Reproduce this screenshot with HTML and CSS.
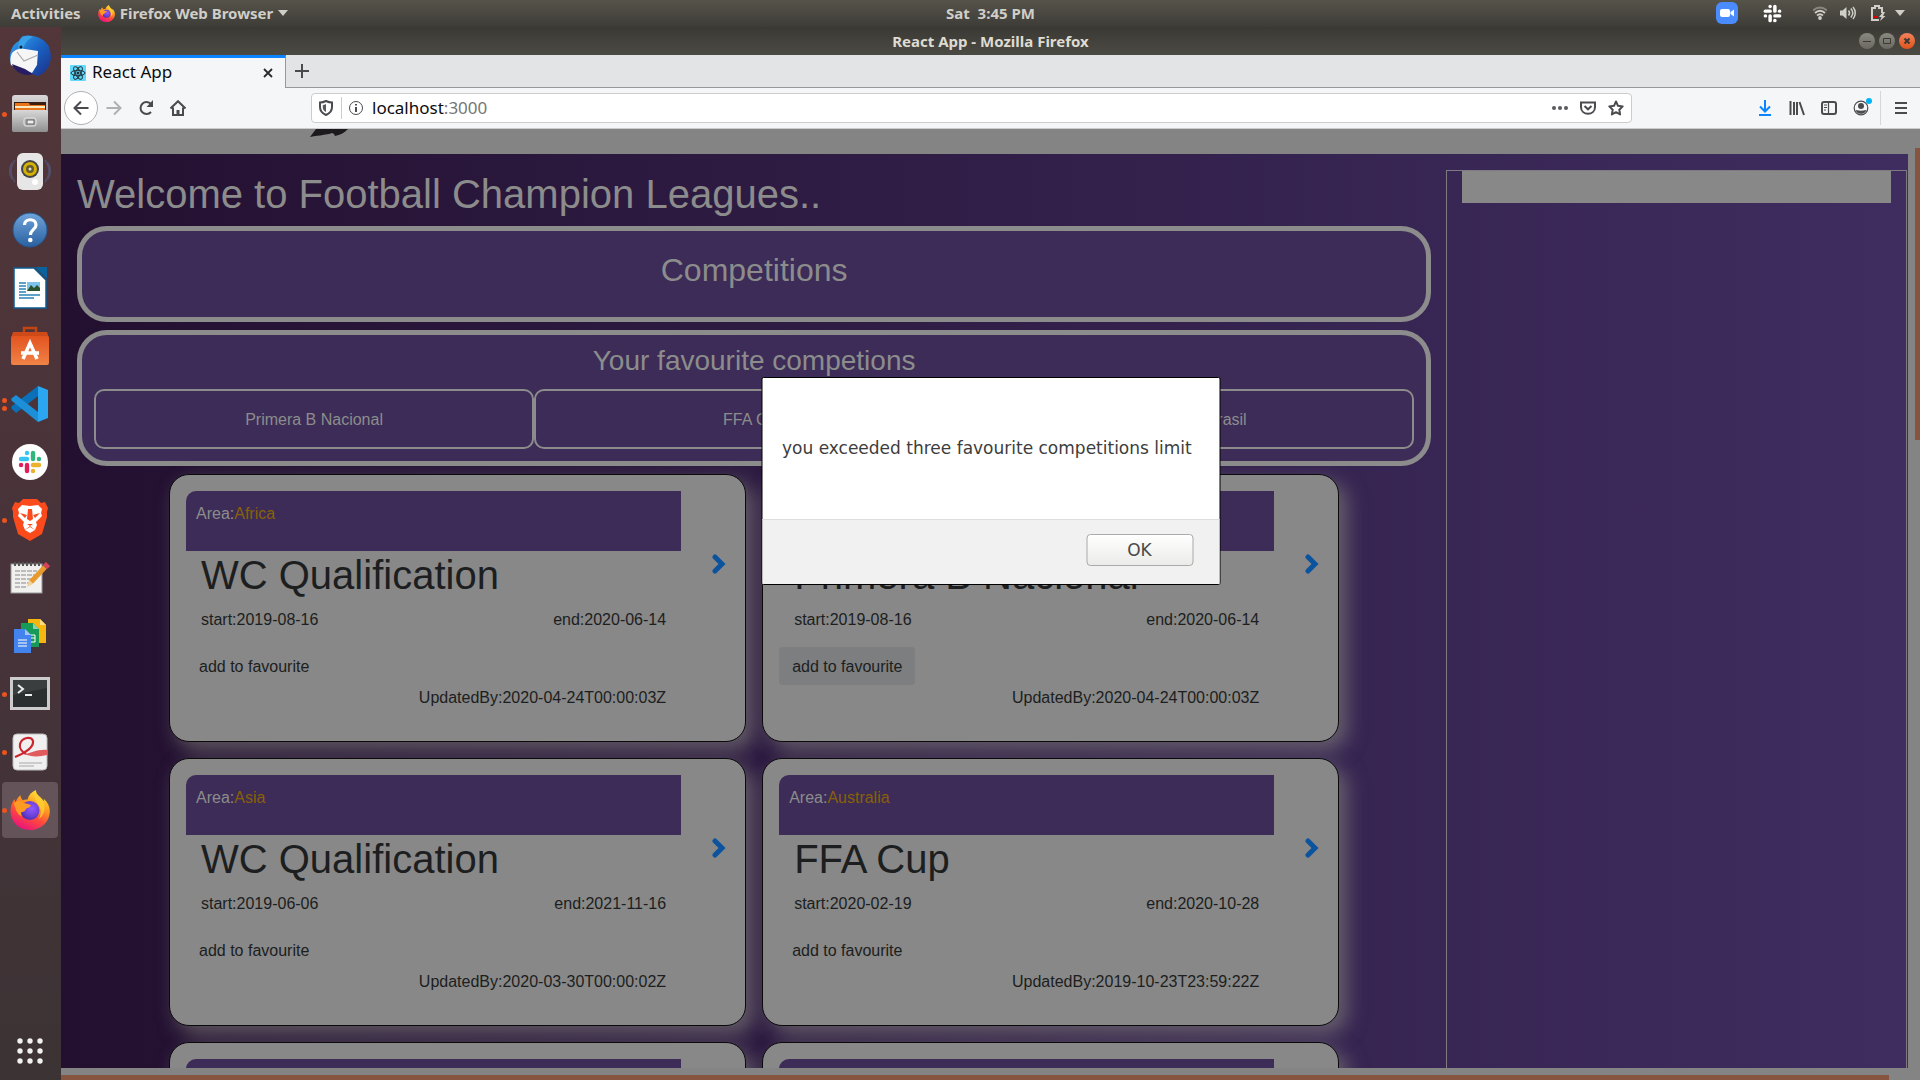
FILE: index.html
```html
<!DOCTYPE html>
<html lang="en">
<head>
<meta charset="utf-8">
<title>React App</title>
<link rel="stylesheet" href="styles.css">
</head>
<body>
<svg width="0" height="0" class="defs" aria-hidden="true">
  <defs>
    <linearGradient id="ffBody" x1="0.8" y1="0" x2="0.3" y2="1"><stop offset="0" stop-color="#fff044"/><stop offset=".35" stop-color="#ffa01e"/><stop offset=".65" stop-color="#ff4a3c"/><stop offset="1" stop-color="#e8117f"/></linearGradient>
    <radialGradient id="ffCore" cx=".6" cy=".4" r=".7"><stop offset="0" stop-color="#9059ff"/><stop offset=".6" stop-color="#6a3fd6"/><stop offset="1" stop-color="#3b2a9c"/></radialGradient>
    <linearGradient id="metal" x1="0" y1="0" x2="0" y2="1"><stop offset="0" stop-color="#d8d8d8"/><stop offset="1" stop-color="#8f8f8f"/></linearGradient>
    <linearGradient id="blueBall" x1="0" y1="0" x2="0" y2="1"><stop offset="0" stop-color="#6fa4dc"/><stop offset="1" stop-color="#2a609f"/></linearGradient>
    <linearGradient id="bird" x1="0" y1="0" x2="1" y2="1"><stop offset="0" stop-color="#35a8f0"/><stop offset=".5" stop-color="#1a62c4"/><stop offset="1" stop-color="#1c2f86"/></linearGradient>
    <linearGradient id="bag" x1="0" y1="0" x2="0" y2="1"><stop offset="0" stop-color="#e3541f"/><stop offset="1" stop-color="#f08348"/></linearGradient>
    <symbol id="firefox" viewBox="0 0 40 40">
      <path fill="url(#ffBody)" d="M20 40C8 40 .5 31 .5 21c0-5 1.800-9 4-12 .2 1.500.6 2.500 1.200 3.200C6.500 9.500 8 7 10.500 5.200c0 2 .9 3.800 2.500 5 1.500-.5 3-.7 4.500-.5C18.500 5 21.500 2 26 0c-.3 3.500 2 5.500 5 8 1 .9 2 2 2.800 3.300.2-1 .2-1.800 0-2.600C38 12.500 39.800 17 39.800 21 39.800 32 31 40 20 40z"/>
      <circle cx="20" cy="20.500" r="9.500" fill="url(#ffCore)"/>
      <path fill="#ff9a22" d="M4 13c4-3 8-3 10 0 2 .5 6 1 7 2.500-.5 1.500-3 2.500-5 3.200 0 2-2 3-4.500 3.300-.8 1.500-.3 3 .5 4.500C8 25 5 20 4 13z"/>
      <path fill="#ffcf33" d="M26 1c0 4 6 6 8 12 2 7-1 13-5 16 3-6 2-11-1-15-3-4-5-8-2-13z" opacity=".8"/>
    </symbol>
    <symbol id="slackmark" viewBox="0 0 24 24">
      <g fill="none" stroke-width="4.400" stroke-linecap="round">
        <path class="s-b" d="M3 9h6"/><path class="s-b" d="M9 3v.1"/>
        <path class="s-g" d="M15 3v6"/><path class="s-g" d="M21 9h-.1"/>
        <path class="s-y" d="M21 15h-6"/><path class="s-y" d="M15 21v-.1"/>
        <path class="s-r" d="M9 21v-6"/><path class="s-r" d="M3 15h.1"/>
      </g>
    </symbol>
    <symbol id="chevron" viewBox="0 0 14 20"><path d="M3 3l7 7-7 7" fill="none" stroke="#0c539e" stroke-width="5" stroke-linecap="round" stroke-linejoin="miter"/></symbol>
  </defs>
</svg>

<header class="topbar">
  <div class="topbar-left">
    <button class="sys-btn" type="button">Activities</button>
    <button class="sys-btn app-menu" type="button">
      <svg width="17" height="17"><use href="#firefox"/></svg>
      Firefox Web Browser
      <svg width="10" height="6" viewBox="0 0 10 6"><path d="M0 0h10L5 6z" fill="#d0cec8"/></svg>
    </button>
  </div>
  <time class="clock">Sat&nbsp; 3:45 PM</time>
  <div class="indicators">
    <svg class="ind-zoom" width="22" height="22" viewBox="0 0 22 22"><rect width="22" height="22" rx="6" fill="#4a8cff"/><rect x="4" y="7" width="10" height="8" rx="2" fill="#fff"/><path d="M14.500 10L18 7.500v7L14.500 12z" fill="#fff"/></svg>
    <svg class="ind-slack" width="19" height="19"><use href="#slackmark"/></svg>
    <svg class="ind-wifi" width="14" height="14" viewBox="0 0 14 14" fill="none" stroke="#d0cec8" stroke-width="1.800"><path d="M0 4.500c4-4 10-4 14 0" opacity=".45"/><path d="M2 7c3-3 7-3 10 0M4 9.500c2-1.700 4-1.700 6 0"/><circle cx="7" cy="12" r="1" fill="#d0cec8"/></svg>
    <svg class="ind-vol" width="16" height="14" viewBox="0 0 16 14" fill="none" stroke="#d0cec8" stroke-width="1.500"><path d="M0 4.500h2.500L6.500 1v12L2.500 9.500H0z" fill="#d0cec8" stroke="none"/><path d="M8.500 4.500c1.300 1.500 1.300 3.500 0 5M10.800 2.500c2.400 2.700 2.400 6.300 0 9M13 1c3 3.500 3 8.500 0 12"/></svg>
    <svg class="ind-bat" width="15" height="16" viewBox="0 0 15 16"><path d="M8 15H1V3h3V1h4v2h3v5" fill="none" stroke="#d0cec8" stroke-width="2"/><path d="M3 11h4v2H3z" fill="#d00"/><path d="M12 7l-4 5h2.500L9 16l5.500-5H12l2-4z" fill="#d0cec8"/></svg>
    <svg width="10" height="6" viewBox="0 0 10 6"><path d="M0 0h10L5 6z" fill="#d0cec8"/></svg>
  </div>
</header>

<div class="workspace">
  <nav class="dock" aria-label="Dock">
    <button class="dock-item" type="button" aria-label="Thunderbird">
      <svg width="42" height="42" viewBox="0 0 42 42"><path fill="url(#bird)" d="M14 1c10-2 20 2 25 9 4 8 4 17-1 24-3 4-6 6-9 7l-12-4L2 30C-1 20 2 10 10 6c1-2 2-4 4-5z"/><path fill="#3aa0e8" d="M12 4c3-4 8-4 12-2-5 2-8 6-10 12l-5 2c0-5 0-9 3-12z"/><path fill="#f6f6f6" d="M3 18c3-4 8-5 13-4l13 2-1 14-5 8-9-3-12-5c-1-4-1-8 1-12z"/><path d="M8 17l7 9 14-6" fill="none" stroke="#aaa" stroke-width="1.200"/><path fill="#281d63" d="M3 29l13 5 8 5C14 42 6 37 3 29z"/><circle cx="12" cy="12" r="1.500" fill="#123"/></svg>
    </button>
    <button class="dock-item" type="button" aria-label="Files"><i class="dot"></i>
      <svg width="38" height="40" viewBox="0 0 38 40"><rect x="1" y="1" width="36" height="37" rx="3" fill="url(#metal)"/><rect x="3" y="8" width="32" height="10" fill="#3c1e10"/><path fill="#e8751a" d="M4 9h14l1 2h15v6H4z"/><path fill="#fbe9c0" d="M4 12h30v2H4z"/><rect x="1" y="16" width="36" height="22" rx="2" fill="url(#metal)"/><rect x="13" y="24" width="12" height="8" rx="2" fill="#aaa" stroke="#e8e8e8"/><rect x="16" y="26" width="7" height="4" fill="#eee" stroke="#666"/></svg>
    </button>
    <button class="dock-item" type="button" aria-label="Rhythmbox">
      <svg width="42" height="40" viewBox="0 0 42 40"><g fill="none" stroke="#56587c" stroke-width="1.500" opacity=".7"><path d="M6 8c-5 7-5 15 0 22M3 11c-3 5-3 11 0 16M36 8c5 7 5 15 0 22M39 11c3 5 3 11 0 16"/></g><rect x="8" y="1" width="26" height="37" rx="6" fill="#e6e6e6"/><circle cx="21" cy="17" r="9" fill="#444"/><circle cx="21" cy="17" r="7" fill="#d4b106"/><circle cx="21" cy="17" r="4" fill="#665c2a"/><circle cx="21" cy="17" r="1.500" fill="#ddd"/><circle cx="26" cy="30" r="3" fill="#fff"/></svg>
    </button>
    <button class="dock-item" type="button" aria-label="Help">
      <svg width="36" height="36" viewBox="0 0 36 36"><circle cx="18" cy="18" r="17" fill="url(#blueBall)" stroke="#24578f"/><path d="M12.500 13c0-7 11.500-7 11.500 0 0 4.500-5.500 4.500-5.500 10" fill="none" stroke="#fff" stroke-width="3.200"/><circle cx="18.300" cy="28" r="2.300" fill="#fff"/></svg>
    </button>
    <button class="dock-item" type="button" aria-label="LibreOffice Writer">
      <svg width="34" height="42" viewBox="0 0 34 42"><path fill="#fff" stroke="#0d5d94" stroke-width="1.500" d="M1 1h20l12 12v28H1z"/><path fill="#0b639e" d="M22 0h12v12z"/><path stroke="#2b83b8" stroke-width="1.500" d="M6 16h7M6 19h7M6 22h7M6 25h7M6 28h21M6 31h15"/><rect x="14" y="15" width="13" height="9" fill="#7cc4ec"/><path fill="#2b542c" d="M14 24l4-6 3 3 3-3 3 3v3z"/></svg>
    </button>
    <button class="dock-item" type="button" aria-label="Ubuntu Software">
      <svg width="38" height="40" viewBox="0 0 38 40"><path d="M13 9V2h12v7" fill="none" stroke="#c24413" stroke-width="2.500"/><path fill="#cf4a18" d="M2 6h34l2 6H0z"/><rect y="10" width="38" height="29" rx="2" fill="url(#bag)"/><path d="M12 33l7-16 7 16M10 27h18" fill="none" stroke="#fff" stroke-width="3.500"/></svg>
    </button>
    <button class="dock-item" type="button" aria-label="Visual Studio Code"><i class="dot"></i><i class="dot"></i>
      <svg width="38" height="38" viewBox="0 0 38 38"><path fill="#0a70b8" d="M27 1v10L5 28l-4-4c-1-1-1-2 0-3z"/><path fill="#1c8fd8" d="M27 37V27L5 10l-4 3c-1 1-1 2 0 3z"/><path fill="#2aa7f0" d="M27 1l10 4v28l-10 4z"/></svg>
    </button>
    <button class="dock-item" type="button" aria-label="Slack">
      <svg width="36" height="36" viewBox="0 0 36 36"><circle cx="18" cy="18" r="18" fill="#fff"/><use href="#slackmark" x="6" y="6" width="24" height="24"/></svg>
    </button>
    <button class="dock-item" type="button" aria-label="Brave"><i class="dot"></i>
      <svg width="36" height="42" viewBox="0 0 36 42"><path fill="#fb4a1b" d="M11 0h14l4 4 4-1 3 6-1 4 0 5-5 17-12 7-12-7L1 18l0-5-1-4 3-6 4 1z"/><path fill="#fff" d="M10 6l8 1 8-1 4 4-1 4 1 3-6 6 1 3-2 5-5-4-5 4-2-5 1-3-6-6 1-3-1-4z"/><path fill="#fb4a1b" d="M8 14l7 2-2 3zM28 14l-7 2 2 3zM16 10h4l1 10-3 2-3-2zM15 25h6l-3 2z"/><path fill="#fff" d="M18 28l5 3-5 3-5-3z"/></svg>
    </button>
    <button class="dock-item" type="button" aria-label="Text Editor">
      <svg width="40" height="34" viewBox="0 0 40 34"><rect x="1" y="3" width="31" height="29" fill="#f0f0ee" stroke="#999"/><path stroke="#555" stroke-width="4" stroke-dasharray="2 2" d="M4 3h26"/><path stroke="#aaa" stroke-width="1.500" stroke-dasharray="5 1" d="M5 10h22M5 14h20M5 18h18M5 22h14M5 26h12"/><path stroke="#e99a2c" stroke-width="5" d="M35 6L21 21"/><path stroke="#d8435c" stroke-width="6" d="M38 3l-3 3"/><path fill="#f2d09b" d="M19 19l4 4-6 3z"/></svg>
    </button>
    <button class="dock-item" type="button" aria-label="Google Docs">
      <svg width="34" height="34" viewBox="0 0 34 34"><path fill="#f5b70f" d="M15 0h12l6 6v18H15z"/><path fill="#fbdc80" d="M27 0v6h6z"/><path fill="#159a58" d="M8 4h12l6 6v18H8z"/><path fill="#8bd0a9" d="M20 4v6h6z"/><path d="M17 16h5v7h-5M17 19h5" fill="none" stroke="#fff"/><path fill="#4283ee" d="M1 10h11l6 6v18H1z"/><path fill="#a4c3f7" d="M12 10v6h6z"/><path stroke="#c6daf9" stroke-width="1.500" d="M5 21h9M5 24h9M5 27h9"/></svg>
    </button>
    <button class="dock-item" type="button" aria-label="Terminal"><i class="dot"></i>
      <svg width="40" height="34" viewBox="0 0 40 34"><rect x="1.500" y="1.500" width="37" height="30" fill="#2c2f2f" stroke="#ccc" stroke-width="3"/><path fill="#454949" d="M3 3h34v8L3 18z" opacity=".6"/><path d="M8 8l5 4-5 4M15 18h7" fill="none" stroke="#eee" stroke-width="2"/></svg>
    </button>
    <button class="dock-item" type="button" aria-label="Document Viewer"><i class="dot"></i>
      <svg width="36" height="38" viewBox="0 0 36 38"><rect x="1" y="1" width="34" height="36" rx="4" fill="#f0f0f0" stroke="#bbb"/><path d="M3 24C13 20 22 14 21 8c-1-5-11-4-13 3-1 4 2 8 6 10" fill="none" stroke="#cc2530" stroke-width="2.200"/><path d="M12 21c8-1 14-5 23-4v5c-8 2-16 2-23-1z" fill="#e05a5e"/><path stroke="#ccc" stroke-width="2" d="M7 30h23M7 33h15"/></svg>
    </button>
    <button class="dock-item active" type="button" aria-label="Firefox"><i class="dot"></i>
      <svg width="40" height="40"><use href="#firefox"/></svg>
    </button>
    <button class="dock-item apps" type="button" aria-label="Show Applications">
      <svg width="28" height="28" viewBox="0 0 28 28" fill="#f2f2f2"><circle cx="4" cy="4" r="2.700"/><circle cx="14" cy="4" r="2.700"/><circle cx="24" cy="4" r="2.700"/><circle cx="4" cy="14" r="2.700"/><circle cx="14" cy="14" r="2.700"/><circle cx="24" cy="14" r="2.700"/><circle cx="4" cy="24" r="2.700"/><circle cx="14" cy="24" r="2.700"/><circle cx="24" cy="24" r="2.700"/></svg>
    </button>
  </nav>

  <div class="window">
    <div class="titlebar">
      <span class="window-title">React App - Mozilla Firefox</span>
      <div class="window-buttons">
        <button class="win-btn" type="button" aria-label="Minimize"><svg width="8" height="8" viewBox="0 0 8 8"><path d="M0 4.500h8"/></svg></button>
        <button class="win-btn" type="button" aria-label="Maximize"><svg width="8" height="8" viewBox="0 0 8 8"><path d="M.5 1.500h7v5h-7z"/></svg></button>
        <button class="win-btn close" type="button" aria-label="Close"><svg width="8" height="8" viewBox="0 0 8 8"><path d="M1.500 1.500l5 5M6.500 1.500l-5 5"/></svg></button>
      </div>
    </div>

    <div class="tabs">
      <div class="tab">
        <svg width="16" height="16" viewBox="0 0 16 16"><rect width="16" height="16" rx="1" fill="#61dafb"/><g fill="none" stroke="#20333a"><ellipse cx="8" cy="8" rx="7" ry="2.700"/><ellipse cx="8" cy="8" rx="7" ry="2.700" transform="rotate(60 8 8)"/><ellipse cx="8" cy="8" rx="7" ry="2.700" transform="rotate(120 8 8)"/></g><circle cx="8" cy="8" r="1.500" fill="#20333a"/></svg>
        <span class="tab-title">React App</span>
        <button class="icon-btn" type="button" aria-label="Close tab"><svg width="10" height="10" viewBox="0 0 10 10"><path d="M1 1l8 8M9 1L1 9" stroke="#2a2a2e" stroke-width="1.800"/></svg></button>
      </div>
      <button class="icon-btn new-tab" type="button" aria-label="New tab"><svg width="14" height="14" viewBox="0 0 14 14"><path d="M7 0v14M0 7h14" stroke="#4a4a4f" stroke-width="2"/></svg></button>
    </div>

    <div class="toolbar">
      <button class="icon-btn back" type="button" aria-label="Back"><svg width="16" height="16" viewBox="0 0 16 16"><path d="M15.500 8H2M8 1.500L1.500 8 8 14.500"/></svg></button>
      <button class="icon-btn nav forward" type="button" aria-label="Forward"><svg width="16" height="16" viewBox="0 0 16 16"><path d="M.5 8H14M8 1.500L14.500 8 8 14.500"/></svg></button>
      <button class="icon-btn nav" type="button" aria-label="Reload"><svg width="16" height="16" viewBox="0 0 16 16"><path d="M13 12A6 6 0 1 1 13 4"/><path d="M15 0v7H8.500z" fill="#4a4a4f" stroke="none"/></svg></button>
      <button class="icon-btn nav" type="button" aria-label="Home"><svg width="16" height="16" viewBox="0 0 16 16"><path d="M.5 8.500L8 1.200l7.500 7.300M3 7.500V15h10V7.500"/><path d="M6.500 15v-5h3v5z" fill="#4a4a4f" stroke="none"/></svg></button>
      <form class="urlbar">
        <svg width="14" height="16" viewBox="0 0 14 16"><path d="M1 2.500Q4 2.500 7 1q3 1.500 6 1.500V7c0 4-2.500 6.500-6 8-3.500-1.500-6-4-6-8z"/><path d="M7 4c-1 .6-2 .8-3.200 1v2.500C3.800 9.500 5 11 7 12z" fill="#5a5a5e" stroke="none"/></svg>
        <i class="url-sep"></i>
        <svg class="thin" width="16" height="16" viewBox="0 0 16 16"><circle cx="8" cy="8" r="6.500"/><path d="M8 7v5M8 4v1.500" stroke-width="2"/></svg>
        <label class="url"><input class="url-host" type="text" value="localhost" aria-label="Address"><span class="url-port">:3000</span></label>
        <svg width="16" height="16" viewBox="0 0 16 16"><g fill="#5a5a5e" stroke="none"><circle cx="2" cy="8" r="2"/><circle cx="8" cy="8" r="2"/><circle cx="14" cy="8" r="2"/></g></svg>
        <svg width="16" height="16" viewBox="0 0 16 16"><path d="M1 2.500h14V7c0 9-14 9-14 0z"/><path d="M4.500 6L8 9.300 11.500 6"/></svg>
        <svg width="16" height="16" viewBox="0 0 16 16"><path d="M8 1.500l2 4.300 4.700.6-3.400 3.300.8 4.800L8 12.200l-4.100 2.300.8-4.800L1.300 6.400 6 5.800z" stroke-linejoin="round"/></svg>
      </form>
      <div class="tools">
        <button class="icon-btn nav download" type="button" aria-label="Downloads"><svg width="14" height="16" viewBox="0 0 14 16"><path d="M7 0v11M2 6.500l5 5 5-5M1 15h12"/></svg></button>
        <button class="icon-btn nav" type="button" aria-label="Library"><svg width="16" height="16" viewBox="0 0 16 16"><path d="M1.500 1v14M5 2v13M8 2v13M10.500 2L15 15"/></svg></button>
        <button class="icon-btn nav" type="button" aria-label="Sidebars"><svg width="16" height="16" viewBox="0 0 16 16"><rect x="1" y="2" width="14" height="12" rx="2"/><path d="M7.500 2v12M3 5h3M3 7.500h3M3 10h2" stroke-width="1.200"/></svg></button>
        <button class="icon-btn nav account" type="button" aria-label="Account"><svg width="16" height="16" viewBox="0 0 16 16"><circle cx="8" cy="8" r="6.800" stroke-width="1.200"/><g fill="#4a4a4f" stroke="none"><circle cx="8" cy="6" r="3"/><path d="M3 10q5 1.500 10 0c0 5-10 5-10 0z"/></g></svg></button>
        <button class="icon-btn menu" type="button" aria-label="Open menu"><svg width="12" height="14" viewBox="0 0 12 14"><path d="M0 2h12M0 7h12M0 12h12"/></svg></button>
      </div>
    </div>

    <div class="viewport">
      <div class="page">
        <div class="site-head"><svg width="40" height="9" viewBox="0 0 40 9"><path fill="#1c1a1c" d="M7 0h32c-4 4-8 6-13 7l-1-2-2-1c-6 2-11 2-22 4z"/></svg></div>
        <div class="columns">
          <main class="main">
            <h1 class="welcome">Welcome to Football Champion Leagues..</h1>
            <section class="panel competitions"><h2>Competitions</h2></section>
            <section class="panel favourites">
              <h3>Your favourite competions</h3>
              <ul class="fav-list"><li>Primera B Nacional</li><li>FFA Cup</li><li>Copa do Brasil</li></ul>
            </section>
            <div class="cards">
              <article class="card">
                <div class="card-body">
                  <p class="area">Area:<span>Africa</span></p>
                  <h1>WC Qualification</h1>
                  <p class="dates"><span>start:2019-08-16</span><span>end:2020-06-14</span></p>
                  <button class="fav-btn" type="button">add to favourite</button>
                  <p class="updated">UpdatedBy:2020-04-24T00:00:03Z</p>
                </div>
                <a class="more" href="#" aria-label="Details"><svg width="14" height="20"><use href="#chevron"/></svg></a>
              </article>
              <article class="card">
                <div class="card-body">
                  <p class="area">Area:<span>Argentina</span></p>
                  <h1>Primera B Nacional</h1>
                  <p class="dates"><span>start:2019-08-16</span><span>end:2020-06-14</span></p>
                  <button class="fav-btn pressed" type="button">add to favourite</button>
                  <p class="updated">UpdatedBy:2020-04-24T00:00:03Z</p>
                </div>
                <a class="more" href="#" aria-label="Details"><svg width="14" height="20"><use href="#chevron"/></svg></a>
              </article>
              <article class="card">
                <div class="card-body">
                  <p class="area">Area:<span>Asia</span></p>
                  <h1>WC Qualification</h1>
                  <p class="dates"><span>start:2019-06-06</span><span>end:2021-11-16</span></p>
                  <button class="fav-btn" type="button">add to favourite</button>
                  <p class="updated">UpdatedBy:2020-03-30T00:00:02Z</p>
                </div>
                <a class="more" href="#" aria-label="Details"><svg width="14" height="20"><use href="#chevron"/></svg></a>
              </article>
              <article class="card">
                <div class="card-body">
                  <p class="area">Area:<span>Australia</span></p>
                  <h1>FFA Cup</h1>
                  <p class="dates"><span>start:2020-02-19</span><span>end:2020-10-28</span></p>
                  <button class="fav-btn" type="button">add to favourite</button>
                  <p class="updated">UpdatedBy:2019-10-23T23:59:22Z</p>
                </div>
                <a class="more" href="#" aria-label="Details"><svg width="14" height="20"><use href="#chevron"/></svg></a>
              </article>
              <article class="card"><div class="card-body"><p class="area"></p></div></article>
              <article class="card"><div class="card-body"><p class="area"></p></div></article>
            </div>
          </main>
          <aside class="side"><div class="side-box"></div></aside>
        </div>
      </div>
      <div class="vscroll"><i></i></div>
      <div class="hscroll"><i></i></div>

      <div class="dialog" role="alertdialog" aria-labelledby="msg">
        <p class="dialog-text" id="msg">you exceeded three favourite competitions limit</p>
        <div class="dialog-foot"><button class="ok" type="button">OK</button></div>
      </div>
    </div>
  </div>
</div>
</body>
</html>
```
FILE: styles.css
```css
*, *::before, *::after { box-sizing: border-box; }
body {
  margin: 0;
  height: 100vh;
  overflow: hidden;
  display: flex;
  flex-direction: column;
  font: 16px/24px "Liberation Sans", Arial, sans-serif;
  background: #3b3a35;
}
h1, h2, h3, p, ul { margin: 0; padding: 0; font-weight: 400; }
button { font: inherit; border: 0; padding: 0; background: none; color: inherit; }
svg { display: block; flex: none; }
.defs { position: absolute; }

/* Desktop top bar */
.topbar {
  flex: none;
  height: 27px;
  display: grid;
  grid-template-columns: 61px 1fr auto 1fr;
  align-items: center;
  padding-bottom: 1px;
  background: linear-gradient(#56534a, #3d3c37);
  color: #d0cec8;
  font: bold 15px/20px "Noto Sans", sans-serif;
}
.topbar-left { grid-column: 1 / 3; display: flex; gap: 17px; padding-left: 11px; }
.app-menu { display: flex; align-items: center; gap: 5px; }
.indicators { display: flex; align-items: center; justify-content: flex-end; padding-right: 15px; }
.ind-zoom { margin-right: 25px; }
.ind-slack { margin-right: 31px; }
.ind-wifi { margin-right: 13px; }
.ind-vol { margin-right: 15px; }
.ind-bat { margin-right: 9px; }

.workspace { flex: 1; min-height: 0; display: flex; }

/* Dock */
.dock {
  flex: none;
  width: 61px;
  display: flex;
  flex-direction: column;
  background: linear-gradient(#523639, #48333a 50%, #3c3335);
  --slack-blue: #36c5f0;
  --slack-green: #2eb67d;
  --slack-yellow: #ecb22e;
  --slack-red: #e01e5a;
}
.dock-item {
  position: relative;
  width: 56px;
  height: 56px;
  margin: 1px 2px;
  display: grid;
  place-items: center;
  border-radius: 4px;
}
.dock-item.active { background: #645459; }
.dock-item.apps { margin-top: auto; }
.dot { position: absolute; left: 0; top: 26px; width: 5px; height: 5px; border-radius: 50%; background: #e95420; }
.dot:has(+ .dot) { top: 22px; }
.dot + .dot { top: 30px; }
.s-b { stroke: var(--slack-blue, #fff); }
.s-g { stroke: var(--slack-green, #fff); }
.s-y { stroke: var(--slack-yellow, #fff); }
.s-r { stroke: var(--slack-red, #fff); }

/* Browser window */
.window { flex: 1; min-width: 0; display: flex; flex-direction: column; }
.titlebar {
  flex: none;
  height: 28px;
  display: grid;
  grid-template-columns: 1fr auto 1fr;
  align-items: center;
  background: linear-gradient(#3a3934, #4b4a43);
  color: #dfdbd2;
  font: bold 15px/20px "Noto Sans", sans-serif;
}
.window-title { grid-column: 2; padding-bottom: 1px; }
.window-buttons { display: flex; gap: 4px; justify-content: flex-end; padding-right: 5px; }
.win-btn { width: 16px; height: 16px; border-radius: 50%; display: grid; place-items: center; background: linear-gradient(#8a8880, #6a6860); }
.win-btn svg { fill: none; stroke: #3a3934; stroke-width: 1; }
.win-btn.close { background: linear-gradient(#f4835c, #e0531c); }
.win-btn.close svg { stroke-width: 2; }

.icon-btn { display: grid; place-items: center; }
.tabs { flex: none; display: flex; height: 33px; background: #e3e4e6; border-bottom: 1px solid #98989b; }
.tab {
  width: 225px;
  height: 33px;
  display: flex;
  align-items: center;
  gap: 6px;
  padding: 0 12px 0 9px;
  background: #f5f6f7;
  border-top: 3px solid #0a84ff;
  border-right: 1px solid #98989b;
}
.tab-title { flex: 1; padding-bottom: 2px; font: 17px/24px "Noto Sans", sans-serif; color: #0c0c0d; }
.new-tab { width: 32px; }
.toolbar {
  flex: none;
  height: 41px;
  display: flex;
  align-items: center;
  padding: 0 0 0 3px;
  background: #f5f6f7;
  border-bottom: 1px solid #ccc;
}
.toolbar svg { fill: none; stroke: #4a4a4f; stroke-width: 2; }
.back { width: 34px; height: 34px; border-radius: 50%; border: 1px solid #b1b1b4; background: #fff; }
.nav { width: 32px; height: 32px; }
.forward { opacity: .4; }
.urlbar {
  flex: 1;
  height: 30px;
  display: flex;
  align-items: center;
  gap: 12px;
  margin: 0 117px;
  padding: 0 7px;
  background: #fff;
  border: 1px solid #ccc;
  border-radius: 4px;
}
.urlbar .thin { stroke-width: 1; }
.url-sep { width: 1px; height: 22px; margin: 0 -6px 0 -4px; background: #ccc; }
.url { flex: 1; display: flex; font: 17px/24px "Noto Sans", sans-serif; color: #767676; margin-left: -4px; }
.url-host { field-sizing: content; border: 0; padding: 0; background: none; font: inherit; color: #0c0c0d; outline: 0; }
.tools { display: flex; align-items: center; }
.download svg { stroke: #0a84ff; }
.account { position: relative; }
.account::after { content: ""; position: absolute; right: 5px; top: 6px; width: 6px; height: 6px; border-radius: 50%; background: #00b3f4; }
.menu { width: 40px; height: 34px; margin-left: 3px; border-left: 1px solid #d6d7d8; }

/* Rendered page, dimmed behind the modal */
.viewport { position: relative; flex: 1; min-height: 0; display: grid; grid-template: minmax(0, 1fr) 12px / minmax(0, 1fr) 12px; background: #848484; }
.page { overflow: hidden; display: flex; flex-direction: column; color: #1c1e20; }
.site-head { flex: none; height: 25px; padding-left: 248px; }
.columns {
  flex: 1;
  min-height: 0;
  display: grid;
  grid-template-columns: 3fr 1fr;
  grid-template-rows: minmax(0, 1fr);
  padding-top: 16px;
  background: linear-gradient(to right, #231030, #3f2d60);
}
.main { padding: 0 15px 0 16px; color: #8c8c8c; }
.welcome { font-size: 40px; line-height: 48px; margin-bottom: 8px; }
.panel { border: 5px solid #8c8c8c; border-radius: 30px; background: #3c2c57; text-align: center; margin-bottom: 8px; }
.competitions { height: 96px; padding-top: 20px; }
.competitions h2 { font-size: 32px; line-height: 38px; }
.favourites { padding: 8px 12px 12px; }
.favourites h3 { font-size: 28px; line-height: 36px; margin-bottom: 10px; }
.fav-list { display: flex; list-style: none; }
.fav-list li { flex: 1; height: 60px; border: 2px solid #8c8c8c; border-radius: 10px; line-height: 58px; }
.cards { display: grid; grid-template-columns: 1fr 1fr; gap: 16px; padding: 0 92px; }
.card {
  display: flex;
  min-height: 268px;
  padding: 16px;
  color: #1c1e20;
  background: #888;
  border: 1px solid #0a0a0a;
  border-radius: 20px;
  box-shadow: 8px 8px 20px rgba(136, 136, 128, .6);
}
.card-body { flex: none; width: calc(100% - 48px); line-height: 26px; }
.card .area { height: 60px; padding: 10px; color: #8c8c8c; background: #3c2c57; border-top-left-radius: 10px; }
.area span { color: #8a6008; }
.card h1 { padding: 0 15px; margin-bottom: 8px; font-size: 40px; line-height: 48px; }
.dates { display: flex; justify-content: space-between; padding: 0 15px; margin-bottom: 14px; }
.fav-btn { display: block; height: 38px; padding: 2px 13px 0; border-radius: 4px; }
.fav-btn.pressed { background: #7c7e80; }
.updated { padding: 0 15px; text-align: right; }
.more { flex: 1; padding-top: 63px; display: flex; justify-content: flex-end; padding-right: 3px; }
.side { margin-right: 1px; border: 1px solid #7d7a80; border-bottom: 0; padding: 0 15px; }
.side-box { height: 32px; background: #888; }

.vscroll { padding: 19px 0 0 7px; }
.vscroll i { display: block; height: 292px; background: #87553f; }
.hscroll { padding: 7px 19px 0 0; }
.hscroll i { display: block; height: 5px; background: #87553f; }

/* Alert */
.dialog {
  position: absolute;
  top: 248px;
  left: 50%;
  transform: translateX(-50%);
  width: 459px;
  border: 1px solid #000;
  border-radius: 2px;
  background: #fff;
  color: #3d3d3d;
  font: 17px/24px "DejaVu Sans", sans-serif;
}
.dialog-text { padding: 58px 0 59px 20px; white-space: nowrap; }
.dialog-foot { display: flex; justify-content: flex-end; padding: 14px 26px 18px; background: #f1f1f1; border-top: 1px solid #ddd; }
.ok { width: 107px; height: 32px; border: 1px solid #aaa; border-radius: 4px; background: linear-gradient(#fff, #ebebe9); color: #4a4a4a; }
```
